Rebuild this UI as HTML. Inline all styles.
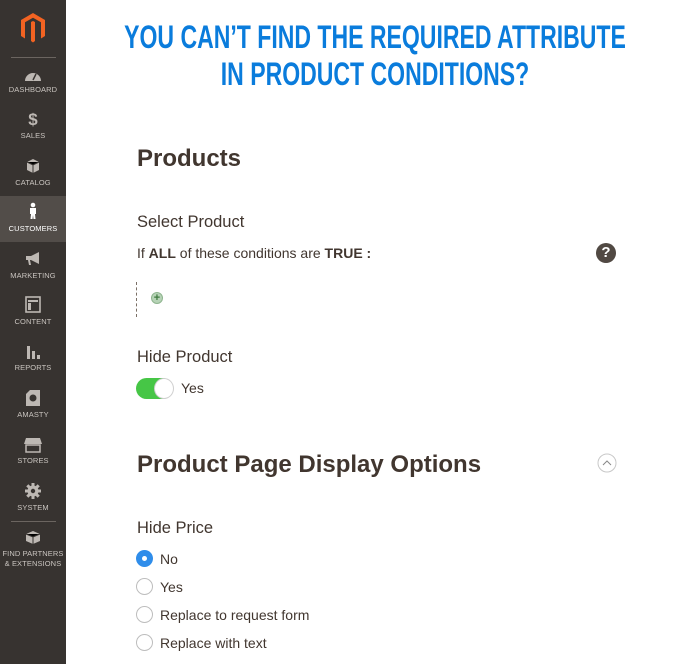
<!DOCTYPE html>
<html><head><meta charset="utf-8"><style>
*{margin:0;padding:0;box-sizing:border-box}
body{width:685px;height:664px;background:#fff;position:relative;overflow:hidden;font-family:"Liberation Sans",sans-serif;color:#41362f}
.sb{position:absolute;left:0;top:0;width:66px;height:664px;background:#373330}
.act{position:absolute;left:0;top:196px;width:66px;height:46px;background:#524d49}
.hr{position:absolute;left:11px;width:45px;height:1px;background:#6b6560}
.it{position:absolute;left:0;width:66px;text-align:center;font-size:7.5px;color:#c9c4bf;letter-spacing:.1px}
.ic{position:absolute;left:23px;width:20px;height:18px}
.t{position:absolute;left:375px;white-space:nowrap;font-weight:bold;color:#0a7cdc;font-size:32px;transform:translateX(-50%) scaleX(0.72);transform-origin:center}
.a{position:absolute;left:137px;white-space:nowrap}
.h1{font-size:24px;font-weight:bold}
.h2{font-size:16.5px}
.p{font-size:14px}
.r{position:absolute;left:136px;width:17px;height:17px;border-radius:50%;border:1px solid #bdbdbd;background:#fff}
</style></head><body>
<div class="sb">
<div class="act"></div>
<svg style="position:absolute;left:20px;top:12px" width="26" height="32" viewBox="0 0 26 32"><path d="M13 1 L25 8 V24 L21 26.5 V10.3 L13 5.7 L5 10.3 V26.5 L1 24 V8 Z" fill="#f26322"/><path d="M11 10 L13 9 L15 10 V29 L13 30.5 L11 29 Z" fill="#f26322"/></svg>
<div class="hr" style="top:57px"></div>
<svg class="ic" style="top:66px" viewBox="0 0 20 18"><path d="M2 15 A8 8 0 0 1 18 15 Z" fill="#bdb8b3"/><path d="M10 14 L13 8" stroke="#373330" stroke-width="1.5"/></svg>
<div class="it" style="top:85px">DASHBOARD</div>
<div class="it" style="top:110px;font-size:17px;font-weight:bold;color:#bdb8b3">$</div>
<div class="it" style="top:131px">SALES</div>
<svg class="ic" style="top:157px" viewBox="0 0 20 18"><path d="M4 5 L10 2 L16 5 V13 L10 16 L4 13 Z" fill="#bdb8b3"/><path d="M4 5 L10 8 L16 5 M10 8 V16" stroke="#373330" stroke-width="1"/></svg>
<div class="it" style="top:178px">CATALOG</div>
<svg class="ic" style="top:202px" viewBox="0 0 20 18"><circle cx="10" cy="3" r="2.3" fill="#fff"/><path d="M7 6 H13 V12 H12 L12.5 17 H10.5 L10 13 L9.5 17 H7.5 L8 12 H7 Z" fill="#fff"/></svg>
<div class="it" style="top:224px;color:#fff">CUSTOMERS</div>
<svg class="ic" style="top:250px" viewBox="0 0 20 18"><path d="M3 6 H8 L16 2 V14 L8 10 H7 L8 15 H6 L5 10 H3 Z" fill="#bdb8b3"/></svg>
<div class="it" style="top:271px">MARKETING</div>
<svg class="ic" style="top:296px" viewBox="0 0 20 18"><rect x="3" y="1" width="14" height="15" fill="none" stroke="#bdb8b3" stroke-width="1.6"/><rect x="5" y="4" width="10" height="2" fill="#bdb8b3"/><rect x="5" y="7" width="3" height="7" fill="#bdb8b3"/></svg>
<div class="it" style="top:317px">CONTENT</div>
<svg class="ic" style="top:343px" viewBox="0 0 20 18"><rect x="4" y="3" width="3" height="13" fill="#bdb8b3"/><rect x="9" y="8" width="3" height="8" fill="#bdb8b3"/><rect x="14" y="12" width="3" height="4" fill="#bdb8b3"/></svg>
<div class="it" style="top:363px">REPORTS</div>
<svg class="ic" style="top:389px" viewBox="0 0 20 18"><path d="M3 1 H17 V17 H3 Z" fill="#bdb8b3"/><circle cx="10" cy="9" r="3.5" fill="#373330"/><path d="M3 1 L7 1 L3 5 Z" fill="#373330"/></svg>
<div class="it" style="top:410px">AMASTY</div>
<svg class="ic" style="top:436px" viewBox="0 0 20 18"><path d="M3 2 H17 L19 8 H1 Z" fill="#bdb8b3"/><rect x="3" y="9" width="14" height="7" fill="none" stroke="#bdb8b3" stroke-width="1.5"/></svg>
<div class="it" style="top:456px">STORES</div>
<svg class="ic" style="top:482px" viewBox="0 0 20 18"><circle cx="10" cy="9" r="5.5" fill="#bdb8b3"/><path d="M10 1 V17 M2 9 H18 M4.3 3.3 L15.7 14.7 M15.7 3.3 L4.3 14.7" stroke="#bdb8b3" stroke-width="3"/><circle cx="10" cy="9" r="2.2" fill="#373330"/></svg>
<div class="it" style="top:503px">SYSTEM</div>
<div class="hr" style="top:521px"></div>
<svg class="ic" style="top:528px" viewBox="0 0 20 18"><path d="M3 6 L10 3 L17 6 V13 L10 16 L3 13 Z" fill="#bdb8b3"/><path d="M3 6 L10 9 L17 6 M10 9 V16" stroke="#373330" stroke-width="1"/></svg>
<div class="it" style="top:549px">FIND PARTNERS</div>
<div class="it" style="top:559px">&amp; EXTENSIONS</div>
</div>

<div class="t" style="top:19px">YOU CAN’T FIND THE REQUIRED ATTRIBUTE</div>
<div class="t" style="top:56px">IN PRODUCT CONDITIONS?</div>

<div class="a h1" style="top:145px">Products</div>
<div class="a h2" style="top:213px">Select Product</div>
<div class="a p" style="top:245px">If <b>ALL</b> of these conditions are <b>TRUE :</b></div>
<div style="position:absolute;left:596px;top:243px;width:20px;height:20px;border-radius:50%;background:#514943;color:#fff;font-weight:bold;font-size:15px;text-align:center;line-height:20px">?</div>
<div style="position:absolute;left:136px;top:282px;height:35px;border-left:1px dashed #7a6f66"></div>
<div style="position:absolute;left:151px;top:292px;width:12px;height:12px;border-radius:50%;background:#b6d3b6;border:1px solid #8fb58f;color:#3f7a3f;font-size:11px;font-weight:bold;text-align:center;line-height:10px">+</div>
<div class="a h2" style="top:348px">Hide Product</div>
<div style="position:absolute;left:136px;top:378px;width:37px;height:21px;border-radius:11px;background:#46c646"></div>
<div style="position:absolute;left:154px;top:378px;width:20px;height:21px;border-radius:50%;background:#fff;border:1px solid #cfcfcf"></div>
<div class="a p" style="left:181px;top:380px">Yes</div>

<div class="a h1" style="top:451px">Product Page Display Options</div>
<svg style="position:absolute;left:597px;top:453px" width="20" height="20" viewBox="0 0 20 20"><circle cx="10" cy="10" r="9" fill="none" stroke="#c8c8c8"/><path d="M6 12 L10 8 L14 12" fill="none" stroke="#888" stroke-width="1"/></svg>
<div class="a h2" style="top:519px">Hide Price</div>
<div class="r" style="top:550px;border:none;background:#2f8dea"></div><div style="position:absolute;left:142px;top:556px;width:5px;height:5px;border-radius:50%;background:#fff"></div>
<div class="a p" style="left:160px;top:551px">No</div>
<div class="r" style="top:578px"></div><div class="a p" style="left:160px;top:579px">Yes</div>
<div class="r" style="top:606px"></div><div class="a p" style="left:160px;top:607px">Replace to request form</div>
<div class="r" style="top:634px"></div><div class="a p" style="left:160px;top:635px">Replace with text</div>
</body></html>
